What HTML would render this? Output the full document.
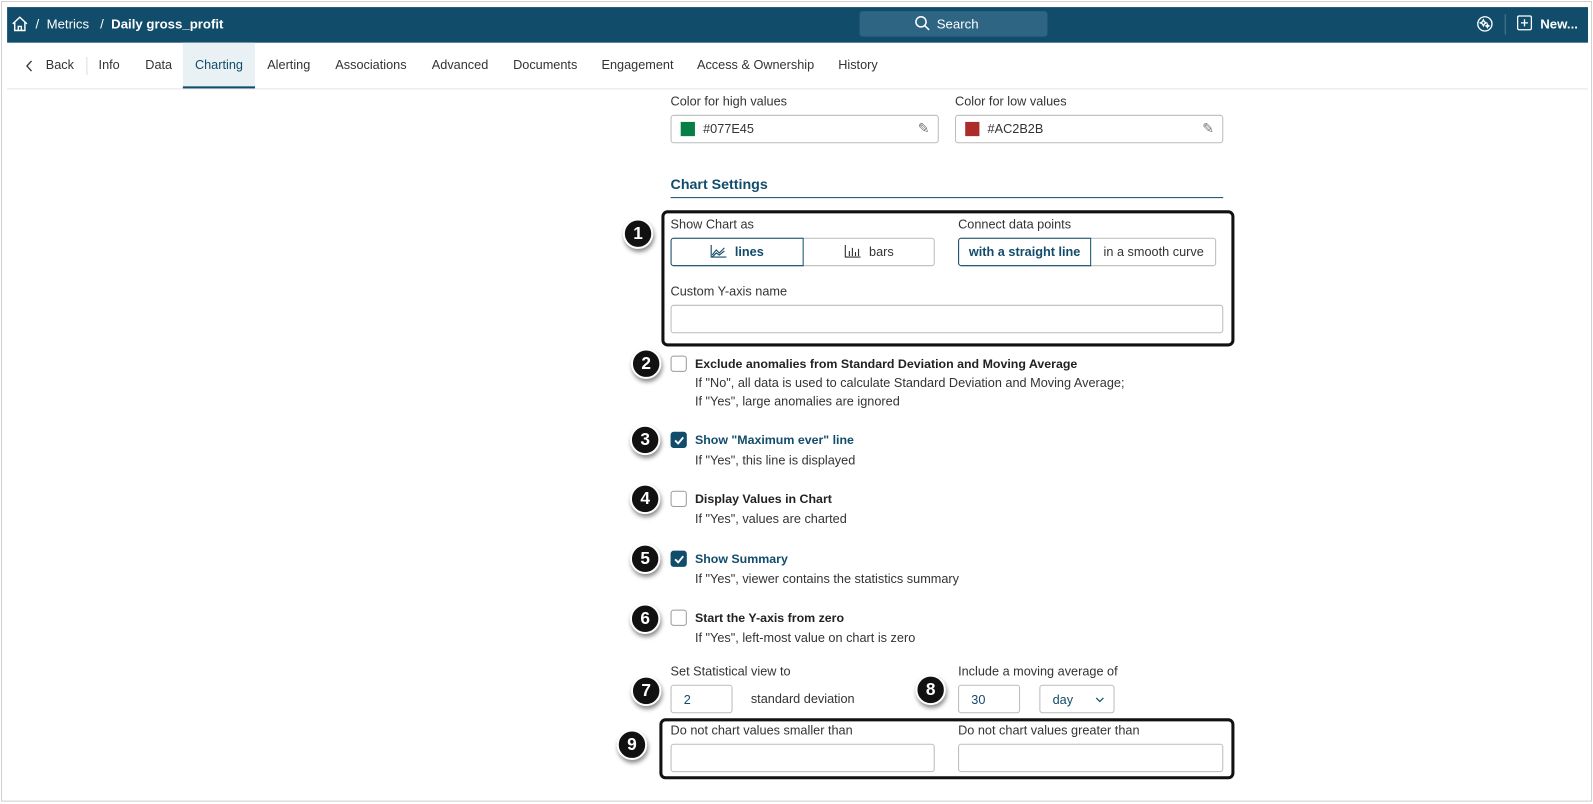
<!DOCTYPE html><html><head><style>
*{box-sizing:border-box;margin:0;padding:0}
body{width:1593px;height:804px;background:#fff;font-family:"Liberation Sans",sans-serif;font-size:12.5px;color:#333;position:relative;overflow:hidden}
#w{position:absolute;left:0;top:0;width:1568px;height:791px;transform:scale(1.016);transform-origin:0 0}
.a{position:absolute}
.frame{left:1px;top:1px;width:1566px;height:788px;border:1px solid #cfcfcf}
.hdr{left:7px;top:7px;width:1556px;height:35px;background:#114c6b;color:#fff}
.tabs{left:7px;top:42px;width:1556px;height:46px;border-bottom:1px solid #e3e3e3}
.tab{position:absolute;top:0;height:45px;line-height:45px;font-size:12.5px;color:#333}
.lbl{font-size:12.5px;color:#333}
.inp{border:1px solid #bbb;border-radius:3px;background:#fff}
.cb{width:16px;height:16px;border:1px solid #999;border-radius:3px;background:#fff}
.cbc{background:#114c6b;border-color:#114c6b}
.num{width:30px;height:30px;border-radius:50%;background:#111;border:2px solid #fff;box-shadow:1px 3px 4px rgba(0,0,0,.45);color:#fff;font-weight:bold;font-size:17px;text-align:center;line-height:26px}
.bt{font-weight:bold;color:#222;font-size:12.2px}
.bb{font-weight:bold;color:#114c6b;font-size:12.2px}
.box{border:3px solid #111;border-radius:6px}
</style></head><body><div id="w">
<div class="a frame"></div>
<div class="a hdr">
 <svg class="a" style="left:4px;top:8px" width="17" height="17" viewBox="0 0 17 17" fill="none" stroke="#fff" stroke-width="1.4"><path d="M1.5 8.5L8.5 2l7 6.5M3.5 7v8h10V7M7 15v-4h3v4"/></svg>
 <div class="a" style="left:28px;top:9px;font-size:13px">/&nbsp;&nbsp;Metrics&nbsp;&nbsp;&nbsp;/&nbsp;&nbsp;<b>Daily gross_profit</b></div>
 <div class="a" style="left:839px;top:4px;width:185px;height:25px;background:#2d6583;border-radius:3px"></div>
 <svg class="a" style="left:893px;top:8px" width="16" height="16" viewBox="0 0 16 16" fill="none" stroke="#fff" stroke-width="1.5"><circle cx="6.5" cy="6.5" r="5"/><path d="M10 10l4.5 4.5"/></svg>
 <div class="a" style="left:915px;top:9px;font-size:13px">Search</div>
 <svg class="a" style="left:1446px;top:8px" width="17" height="17" viewBox="0 0 17 17" fill="none" stroke="#fff" stroke-width="1.3"><circle cx="8.5" cy="8.5" r="7"/><path d="M6 6.5l1 -2 1 2 2 1-2 1-1 2-1-2-2-1zM11 9l.5 1 1 .5-1 .5-.5 1-.5-1-1-.5 1-.5z"/></svg>
 <div class="a" style="left:1474px;top:7px;width:1px;height:20px;background:#4f7a92"></div>
 <svg class="a" style="left:1486px;top:8px" width="15" height="15" viewBox="0 0 15 15" fill="none" stroke="#fff" stroke-width="1.3"><rect x=".7" y=".7" width="13.6" height="13.6" rx="1.5"/><path d="M7.5 4v7M4 7.5h7"/></svg>
 <div class="a" style="left:1509px;top:9px;font-size:13px;font-weight:bold">New...</div>
</div>
<div class="a tabs">
 <svg class="a" style="left:18px;top:17px" width="8" height="12" viewBox="0 0 8 12" fill="none" stroke="#333" stroke-width="1.3"><path d="M6 1L1.5 6 6 11"/></svg>
 <div class="tab" style="left:38px">Back</div>
 <div class="a" style="left:78px;top:14px;width:1px;height:18px;background:#ddd"></div>
 <div class="tab" style="left:90px">Info</div>
 <div class="tab" style="left:136px">Data</div>
 <div class="tab" style="left:173px;width:71px;background:#eaf1f4;color:#114c6b;text-align:center;border-bottom:2px solid #114c6b">Charting</div>
 <div class="tab" style="left:256px">Alerting</div>
 <div class="tab" style="left:323px">Associations</div>
 <div class="tab" style="left:418px">Advanced</div>
 <div class="tab" style="left:498px">Documents</div>
 <div class="tab" style="left:585px">Engagement</div>
 <div class="tab" style="left:679px">Access &amp; Ownership</div>
 <div class="tab" style="left:818px">History</div>
</div>

<div class="a lbl" style="left:660px;top:93px">Color for high values</div>
<div class="a lbl" style="left:940px;top:93px">Color for low values</div>
<div class="a inp" style="left:660px;top:113px;width:264px;height:28px"><div class="a" style="left:9px;top:6px;width:14px;height:14px;background:#077e45"></div><div class="a" style="left:31px;top:6px">#077E45</div><div class="a" style="right:8px;top:4px;color:#777;font-size:14px">&#9998;</div></div>
<div class="a inp" style="left:940px;top:113px;width:264px;height:28px"><div class="a" style="left:9px;top:6px;width:14px;height:14px;background:#ac2b2b"></div><div class="a" style="left:31px;top:6px">#AC2B2B</div><div class="a" style="right:8px;top:4px;color:#777;font-size:14px">&#9998;</div></div>

<div class="a" style="left:660px;top:173px;font-size:14px;font-weight:bold;color:#114c6b">Chart Settings</div>
<div class="a" style="left:660px;top:194px;width:544px;height:1px;background:#114c6b"></div>

<div class="a box" style="left:651px;top:207px;width:564px;height:134px"></div>
<div class="a lbl" style="left:660px;top:214px">Show Chart as</div>
<div class="a lbl" style="left:943px;top:214px">Connect data points</div>
<div class="a inp" style="left:660px;top:234px;width:260px;height:28px;"></div>
<div class="a" style="left:660px;top:234px;width:131px;height:28px;border:1px solid #114c6b;border-radius:3px 0 0 3px;text-align:center;line-height:26px;font-weight:bold;color:#114c6b"><svg width="16" height="13" viewBox="0 0 16 13" fill="none" stroke="#114c6b" stroke-width="1.1" style="vertical-align:-2px;margin-right:8px"><path d="M1 0v12h15M2 10l4-5 3 3 5-5M2 12l4-4 3 2 5-4"/></svg>lines</div>
<div class="a" style="left:791px;top:234px;width:129px;height:28px;text-align:center;line-height:28px"><svg width="16" height="13" viewBox="0 0 16 13" fill="none" stroke="#333" stroke-width="1.1" style="vertical-align:-2px;margin-right:8px"><path d="M1 0v12h15M5 11V6M8 11V3M11 11V7M14 11V4"/></svg>bars</div>
<div class="a inp" style="left:943px;top:234px;width:254px;height:28px"></div>
<div class="a" style="left:943px;top:234px;width:131px;height:28px;border:1px solid #114c6b;border-radius:3px 0 0 3px;text-align:center;line-height:26px;font-weight:bold;color:#114c6b">with a straight line</div>
<div class="a" style="left:1074px;top:234px;width:123px;height:28px;text-align:center;line-height:28px">in a smooth curve</div>
<div class="a lbl" style="left:660px;top:280px">Custom Y-axis name</div>
<div class="a inp" style="left:660px;top:300px;width:544px;height:28px"></div>
<div class="a num" style="left:613px;top:215px">1</div>

<div class="a num" style="left:621px;top:343px">2</div>
<div class="a cb" style="left:660px;top:350px"></div>
<div class="a bt" style="left:684px;top:351px">Exclude anomalies from Standard Deviation and Moving Average</div>
<div class="a lbl" style="left:684px;top:370px">If "No", all data is used to calculate Standard Deviation and Moving Average;</div>
<div class="a lbl" style="left:684px;top:388px">If "Yes", large anomalies are ignored</div>

<div class="a num" style="left:620px;top:418px">3</div>
<div class="a cb cbc" style="left:660px;top:425px"><svg class="a" style="left:2px;top:3px" width="11" height="9" viewBox="0 0 11 9" fill="none" stroke="#fff" stroke-width="1.8"><path d="M1.5 4.5l3 3 5-6"/></svg></div>
<div class="a bb" style="left:684px;top:426px">Show "Maximum ever" line</div>
<div class="a lbl" style="left:684px;top:446px">If "Yes", this line is displayed</div>

<div class="a num" style="left:620px;top:476px">4</div>
<div class="a cb" style="left:660px;top:483px"></div>
<div class="a bt" style="left:684px;top:484px">Display Values in Chart</div>
<div class="a lbl" style="left:684px;top:504px">If "Yes", values are charted</div>

<div class="a num" style="left:620px;top:535px">5</div>
<div class="a cb cbc" style="left:660px;top:542px"><svg class="a" style="left:2px;top:3px" width="11" height="9" viewBox="0 0 11 9" fill="none" stroke="#fff" stroke-width="1.8"><path d="M1.5 4.5l3 3 5-6"/></svg></div>
<div class="a bb" style="left:684px;top:543px">Show Summary</div>
<div class="a lbl" style="left:684px;top:563px">If "Yes", viewer contains the statistics summary</div>

<div class="a num" style="left:620px;top:594px">6</div>
<div class="a cb" style="left:660px;top:600px"></div>
<div class="a bt" style="left:684px;top:601px">Start the Y-axis from zero</div>
<div class="a lbl" style="left:684px;top:621px">If "Yes", left-most value on chart is zero</div>

<div class="a num" style="left:621px;top:665px">7</div>
<div class="a lbl" style="left:660px;top:654px">Set Statistical view to</div>
<div class="a inp" style="left:660px;top:674px;width:61px;height:28px;padding:7px 0 0 12px;color:#114c6b">2</div>
<div class="a lbl" style="left:739px;top:681px">standard deviation</div>
<div class="a num" style="left:901px;top:664px">8</div>
<div class="a lbl" style="left:943px;top:654px">Include a moving average of</div>
<div class="a inp" style="left:943px;top:674px;width:61px;height:28px;padding:7px 0 0 12px;color:#114c6b">30</div>
<div class="a inp" style="left:1023px;top:674px;width:74px;height:28px;padding:7px 0 0 12px;color:#114c6b">day<svg class="a" style="left:54px;top:11px" width="9" height="6" viewBox="0 0 9 6" fill="none" stroke="#114c6b" stroke-width="1.2"><path d="M1 1l3.5 3.5L8 1"/></svg></div>

<div class="a box" style="left:649px;top:707px;width:566px;height:60px"></div>
<div class="a num" style="left:607px;top:718px">9</div>
<div class="a lbl" style="left:660px;top:712px">Do not chart values smaller than</div>
<div class="a lbl" style="left:943px;top:712px">Do not chart values greater than</div>
<div class="a inp" style="left:660px;top:732px;width:260px;height:28px"></div>
<div class="a inp" style="left:943px;top:732px;width:261px;height:28px"></div>
</div></body></html>
